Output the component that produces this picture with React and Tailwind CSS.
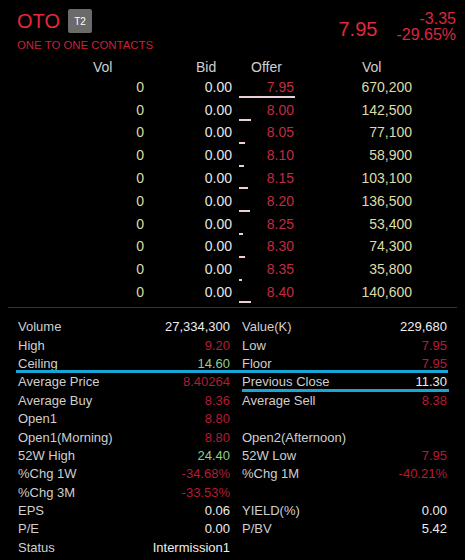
import React from "react";

const book = [
  { offer: "7.95", vol: 670200 },
  { offer: "8.00", vol: 142500 },
  { offer: "8.05", vol: 77100 },
  { offer: "8.10", vol: 58900 },
  { offer: "8.15", vol: 103100 },
  { offer: "8.20", vol: 136500 },
  { offer: "8.25", vol: 53400 },
  { offer: "8.30", vol: 74300 },
  { offer: "8.35", vol: 35800 },
  { offer: "8.40", vol: 140600 },
];

const maxVol = 670200;

const W = "text-[#ededed]";
const R = "text-[#b41c36]";
const G = "text-[#8fcf8a]";

// pairs of [left, right] rows
const stats = [
  [["Volume", "27,334,300", W], ["Value(K)", "229,680", W]],
  [["High", "9.20", R], ["Low", "7.95", R]],
  [["Ceiling", "14.60", G], ["Floor", "7.95", R]],
  [["Average Price", "8.40264", R], ["Previous Close", "11.30", W]],
  [["Average Buy", "8.36", R], ["Average Sell", "8.38", R]],
  [["Open1", "8.80", R], null],
  [["Open1(Morning)", "8.80", R], ["Open2(Afternoon)", "", W]],
  [["52W High", "24.40", G], ["52W Low", "7.95", R]],
  [["%Chg 1W", "-34.68%", R], ["%Chg 1M", "-40.21%", R]],
  [["%Chg 3M", "-33.53%", R], null],
  [["EPS", "0.06", W], ["YIELD(%)", "0.00", W]],
  [["P/E", "0.00", W], ["P/BV", "5.42", W]],
  [["Status", "Intermission1", W], null],
];

const StatCell = ({ item }) => (
  <div className="flex h-[18.36px] items-center justify-between">
    {item && (
      <>
        <span className="text-[#cfcfcf]">{item[0]}</span>
        <span className={item[2]}>{item[1]}</span>
      </>
    )}
  </div>
);

export default function App() {
  return (
    <div
      className="w-[465px] h-[560px] bg-black overflow-hidden"
      style={{ fontFamily: '"Liberation Sans", Arial, sans-serif' }}
    >
      {/* header */}
      <div className="flex h-[59px] justify-between">
        <div className="pl-[17px] pt-[9px]">
          <div className="flex h-[24px] items-center gap-[8px]">
            <span className="text-[20px] leading-none text-[#e8263e]">OTO</span>
            <span className="flex h-[24px] w-[24px] items-center justify-center rounded-[2px] bg-[#6a6a6a] text-[10px] text-white">
              T2
            </span>
          </div>
          <div className="mt-[6px] text-[11.4px] leading-[13px] text-[#c8203a]">
            ONE TO ONE CONTACTS
          </div>
        </div>
        <div className="flex items-center gap-[19px] self-start pr-[9px] pt-[11px]">
          <span className="mt-[4px] text-[20px] leading-none text-[#e2283e]">7.95</span>
          <div className="flex flex-col items-end text-[16px] leading-[16px] text-[#d92840]">
            <span>-3.35</span>
            <span>-29.65%</span>
          </div>
        </div>
      </div>

      {/* order book header */}
      <div className="flex h-[17px] items-center text-[14px] text-[#cfcfcf]">
        <span className="w-[196px] pl-[93px]">Vol</span>
        <span className="w-[55px]">Bid</span>
        <span className="w-[111px]">Offer</span>
        <span>Vol</span>
      </div>

      {/* order book rows */}
      <div className="text-[14px]">
        {book.map((r) => (
          <div key={r.offer} className="flex h-[22.8px] items-center">
            <span className="w-[144px] text-right text-[#dcdca8]">0</span>
            <span className="w-[88px] text-right text-[#e6e6e6]">0.00</span>
            <div className="relative flex h-full w-[62px] items-center justify-end">
              <span className="text-[#c42a42]">{r.offer}</span>
              <div
                className="absolute bottom-[0.5px] left-[7px] h-[2px] bg-[#ead0d6]"
                style={{ width: `${Math.max(2, Math.round((r.vol / maxVol) * 56))}px` }}
              />
            </div>
            <span className="w-[118px] text-right text-[#dcdca8]">
              {r.vol.toLocaleString("en-US")}
            </span>
          </div>
        ))}
      </div>

      <div className="mx-[8px] mt-[3px] h-px bg-[#333333]" />

      {/* stats */}
      <div className="relative mt-[10px] text-[13px]">
        <div className="grid grid-cols-[212px_205px] gap-x-[12px] pl-[18px]">
          {stats.map((pair, i) => (
            <React.Fragment key={i}>
              <StatCell item={pair[0]} />
              <StatCell item={pair[1]} />
            </React.Fragment>
          ))}
        </div>
        <div className="absolute left-[16px] top-[52px] h-[3px] w-[432px] bg-[#17a6d8]" />
        <div className="absolute left-[242px] top-[71.5px] h-[3px] w-[207px] bg-[#17a6d8]" />
      </div>
    </div>
  );
}
